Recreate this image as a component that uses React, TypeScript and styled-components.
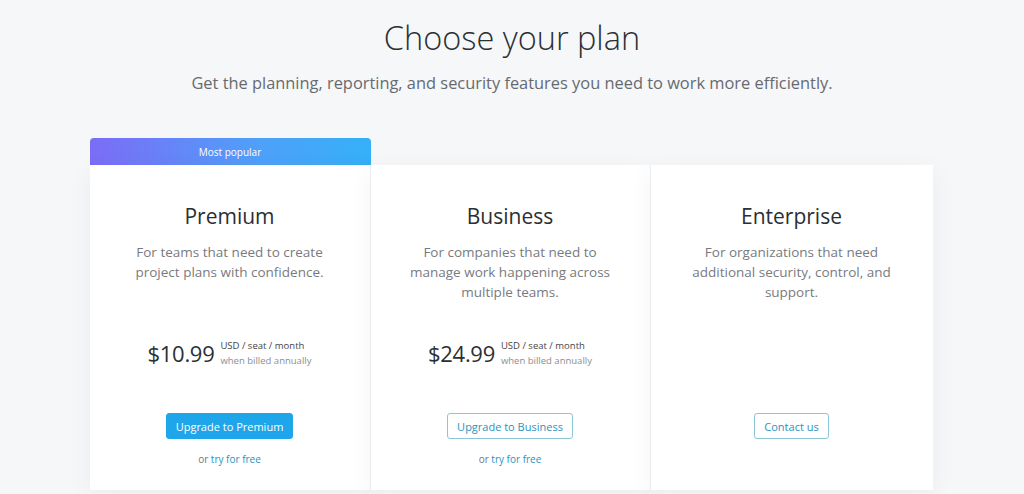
import styled, { createGlobalStyle } from "styled-components";

const GlobalStyle = createGlobalStyle`
  html, body {
    margin: 0;
    padding: 0;
    background: #f6f7f9;
    font-family: "Open Sans", "Noto Sans", sans-serif;
    color: #333;
  }
`;

const Page = styled.main`
  width: 1024px;
  height: 494px;
  overflow: hidden;
  display: flex;
  flex-direction: column;
  align-items: center;
`;

const Heading = styled.h1`
  margin: 16px 0 0;
  font-size: 32.5px;
  font-weight: 300;
  line-height: 44px;
  color: #2b2f33;
`;

const Lead = styled.p`
  margin: 12px 0 0;
  font-size: 16.4px;
  line-height: 22px;
  color: #666a70;
`;

const Plans = styled.section`
  margin-top: 44px;
  display: grid;
  grid-template-columns: 281px 280px 282px;
  width: 843px;
  margin-left: -2px;
  align-items: end;
`;

const Column = styled.div`
  display: flex;
  flex-direction: column;
`;

const Banner = styled.div`
  height: 27px;
  border-radius: 4px 4px 0 0;
  background: linear-gradient(90deg, #7b6cf6 0%, #4fa0f9 60%, #35b0f8 100%);
  color: #fff;
  font-size: 10px;
  display: flex;
  align-items: center;
  justify-content: center;
`;

const Card = styled.div<{ $last?: boolean }>`
  height: 325px;
  background: #fff;
  border-right: ${(p) => (p.$last ? "none" : "1px solid #eef0f3")};
  box-shadow: 0 6px 24px rgba(30, 40, 60, 0.05);
  display: flex;
  flex-direction: column;
  align-items: center;
  text-align: center;
  padding-top: 37px;
  box-sizing: border-box;
`;

const PlanName = styled.h2`
  margin: 0;
  font-size: 21px;
  font-weight: 400;
  line-height: 28px;
  color: #2b2f33;
`;

const Blurb = styled.p`
  margin: 12px 0 0;
  width: 210px;
  height: 60px;
  font-size: 13.5px;
  line-height: 20px;
  color: #777b80;
`;

const PriceRow = styled.div<{ $hidden?: boolean }>`
  margin-top: 36px;
  height: 30px;
  display: flex;
  align-items: center;
  gap: 6px;
  visibility: ${(p) => (p.$hidden ? "hidden" : "visible")};
`;

const Amount = styled.span`
  font-size: 22px;
  color: #2b2f33;
  letter-spacing: -0.3px;
`;

const Terms = styled.span`
  display: flex;
  flex-direction: column;
  text-align: left;
  font-size: 9.5px;
  line-height: 15px;
  color: #444;
  & > span:last-child {
    color: #8a8e93;
  }
`;

const Button = styled.button<{ $primary?: boolean }>`
  margin-top: 45px;
  height: 26px;
  padding: 0 9px;
  border-radius: 3px;
  font-family: inherit;
  font-size: 11px;
  cursor: pointer;
  border: 1px solid ${(p) => (p.$primary ? "#1ea5ea" : "#8cc6d9")};
  background: ${(p) => (p.$primary ? "#1ea5ea" : "#fff")};
  color: ${(p) => (p.$primary ? "#fff" : "#2b93bd")};
`;

const Trial = styled.p`
  margin: 13px 0 0;
  font-size: 10px;
  color: #6f7880;
  a {
    color: #2b93bd;
    text-decoration: none;
  }
`;

type Plan = {
  name: string;
  blurb: string;
  price?: string;
  cta: string;
  primary?: boolean;
  popular?: boolean;
};

const plans: Plan[] = [
  {
    name: "Premium",
    blurb: "For teams that need to create project plans with confidence.",
    price: "$10.99",
    cta: "Upgrade to Premium",
    primary: true,
    popular: true,
  },
  {
    name: "Business",
    blurb: "For companies that need to manage work happening across multiple teams.",
    price: "$24.99",
    cta: "Upgrade to Business",
  },
  {
    name: "Enterprise",
    blurb: "For organizations that need additional security, control, and support.",
    cta: "Contact us",
  },
];

export default function App() {
  return (
    <>
      <GlobalStyle />
      <Page>
        <Heading>Choose your plan</Heading>
        <Lead>
          Get the planning, reporting, and security features you need to work more efficiently.
        </Lead>
        <Plans>
          {plans.map((plan, i) => (
            <Column key={plan.name}>
              {plan.popular && <Banner>Most popular</Banner>}
              <Card $last={i === plans.length - 1}>
                <PlanName>{plan.name}</PlanName>
                <Blurb>{plan.blurb}</Blurb>
                <PriceRow $hidden={!plan.price}>
                  <Amount>{plan.price ?? "$0"}</Amount>
                  <Terms>
                    <span>USD / seat / month</span>
                    <span>when billed annually</span>
                  </Terms>
                </PriceRow>
                <Button $primary={plan.primary}>{plan.cta}</Button>
                {plan.price && (
                  <Trial>
                    or <a href="#">try for free</a>
                  </Trial>
                )}
              </Card>
            </Column>
          ))}
        </Plans>
      </Page>
    </>
  );
}
